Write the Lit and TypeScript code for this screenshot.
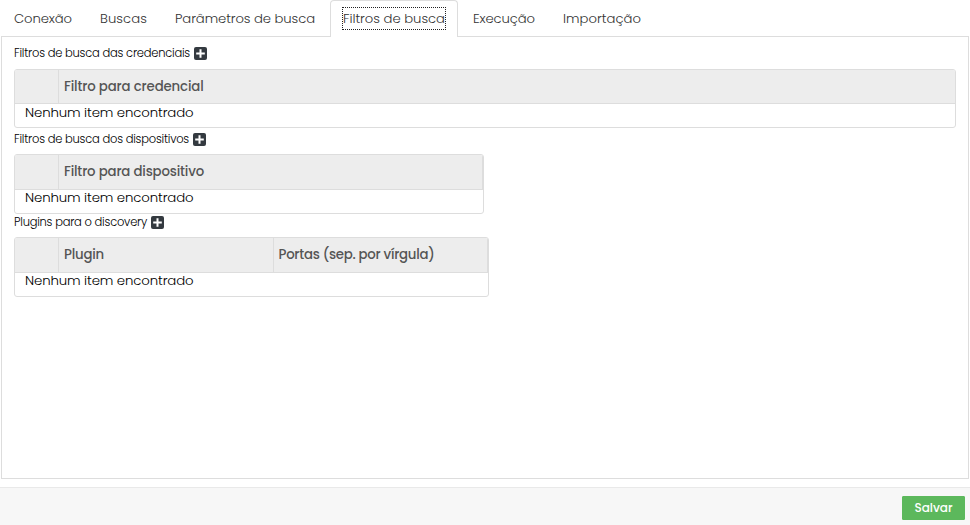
import { LitElement, html, css, svg } from "lit";
import { customElement, property } from "lit/decorators.js";
import { classMap } from "lit/directives/class-map.js";

/** A single line of text tracked so that it spans the given measure. */
@customElement("tracked-text")
class TrackedText extends LitElement {
  @property() text = "";
  @property({ type: Number }) measure = 0;

  static styles = css`
    :host { display: inline-block; white-space: nowrap; }
  `;

  render() {
    return html`<span>${this.text}</span>`;
  }

  updated() {
    const span = this.renderRoot.querySelector("span") as HTMLElement;
    span.style.letterSpacing = "0px";
    const natural = span.getBoundingClientRect().width;
    span.style.letterSpacing = (this.measure - natural) / this.text.length + "px";
    this.style.width = this.measure + "px";
  }
}

interface Column { title: string; measure: number; }

@customElement("filter-table")
class FilterTable extends LitElement {
  @property() label = "";
  @property({ type: Number }) measure = 0;
  @property({ attribute: false }) columns: Column[] = [];

  static styles = css`
    :host { display: block; }
    .caption { display: flex; align-items: center; height: 13px; gap: 4px; font-size: 11.5px; font-weight: 300; line-height: 13px; color: #000; }
    .add { display: block; width: 13px; height: 13px; flex: none; }
    .table { box-sizing: border-box; margin-top: var(--caption-gap, 8px); border: 1px solid #ddd; border-radius: 3px; background: #fff; overflow: hidden; }
    .head { display: flex; box-sizing: border-box; height: var(--head-height, 35px); background: #ededed; border-bottom: 1px solid #ddd; border-right: var(--head-edge, 1px solid #ddd); color: #555; font-size: 13.3px; font-weight: 500; line-height: 33px; }
    .blank { box-sizing: border-box; width: 44px; flex: none; border-right: 1px solid #ddd; }
    .cell { box-sizing: border-box; flex: 1; padding-left: 5px; }
    .cell + .cell { border-left: 1px solid #ddd; }
    .empty { box-sizing: border-box; height: 23px; padding-left: 10px; line-height: var(--empty-line, 15px); font-size: 13.3px; font-weight: 300; color: #000; }
  `;

  render() {
    return html`
      <div class="caption">
        <tracked-text .text=${this.label} .measure=${this.measure}></tracked-text>
        <svg class="add" viewBox="0 0 13 13">
          ${svg`<rect width="13" height="13" rx="2" fill="#343a40"/><path d="M6.5 2.2v8.6M2.2 6.5h8.6" stroke="#fff" stroke-width="2"/>`}
        </svg>
      </div>
      <div class="table">
        <div class="head">
          <div class="blank"></div>
          ${this.columns.map((c) => html`<div class="cell"><tracked-text .text=${c.title} .measure=${c.measure}></tracked-text></div>`)}
        </div>
        <div class="empty"><tracked-text .text=${"Nenhum item encontrado"} .measure=${168.5}></tracked-text></div>
      </div>
    `;
  }
}

@customElement("app-root")
class AppRoot extends LitElement {
  static styles = css`
    :host { display: flex; flex-direction: column; box-sizing: border-box; width: 970px; height: 525px; overflow: hidden; background: #fff; font-family: Poppins, Inter, "Open Sans", sans-serif; }
    .tabs { display: flex; gap: 2px; height: 37px; padding-left: 1px; flex: none; position: relative; z-index: 1; }
    .tab { box-sizing: border-box; height: 37px; padding: 7px 12px 0; border: 1px solid transparent; border-bottom: 0; border-radius: 4px 4px 0 0; font-size: 13.2px; font-weight: 300; line-height: 21px; color: #333; }
    .tab.active { background: #fff; border-color: #ddd; }
    .active tracked-text { outline: 1px dotted #222; }
    .panel { box-sizing: border-box; height: 443px; margin: -1px 1px 0; padding: 10px 12px; border: 1px solid #ddd; flex: none; }
    .credentials { --caption-gap: 9px; --head-edge: 0; --head-height: 34px; --empty-line: 17px; }
    .devices { width: 470px; margin-top: 5px; }
    .plugins { width: 475px; margin-top: 2px; }
    .footer { box-sizing: border-box; display: flex; justify-content: flex-end; height: 38px; margin-top: 8px; padding: 8px 5px 0; border-top: 1px solid #e9e9e9; background: #f7f7f7; flex: none; }
    .save { box-sizing: border-box; width: 63px; height: 24px; margin: 0; padding: 0; border: 1px solid #5cb85c; border-radius: 1px; background: #5cb85c; color: #fff; font: 500 12px/22px Poppins, Inter, "Open Sans", sans-serif; }
  `;

  private tabs = [
    { title: "Conexão", measure: 58 },
    { title: "Buscas", measure: 47 },
    { title: "Parâmetros de busca", measure: 140 },
    { title: "Filtros de busca", measure: 102, active: true },
    { title: "Execução", measure: 62 },
    { title: "Importação", measure: 78 },
  ];

  render() {
    return html`
      <nav class="tabs">
        ${this.tabs.map((t) => html`<div class=${classMap({ tab: true, active: !!t.active })}><tracked-text .text=${t.title} .measure=${t.measure}></tracked-text></div>`)}
      </nav>
      <main class="panel">
        <filter-table class="credentials" .label=${"Filtros de busca das credenciais"} .measure=${176}
          .columns=${[{ title: "Filtro para credencial", measure: 139.5 }]}></filter-table>
        <filter-table class="devices" .label=${"Filtros de busca dos dispositivos"} .measure=${175}
          .columns=${[{ title: "Filtro para dispositivo", measure: 140 }]}></filter-table>
        <filter-table class="plugins" .label=${"Plugins para o discovery"} .measure=${133}
          .columns=${[{ title: "Plugin", measure: 40 }, { title: "Portas (sep. por vírgula)", measure: 156 }]}></filter-table>
      </main>
      <footer class="footer">
        <button class="save"><tracked-text .text=${"Salvar"} .measure=${38}></tracked-text></button>
      </footer>
    `;
  }
}
